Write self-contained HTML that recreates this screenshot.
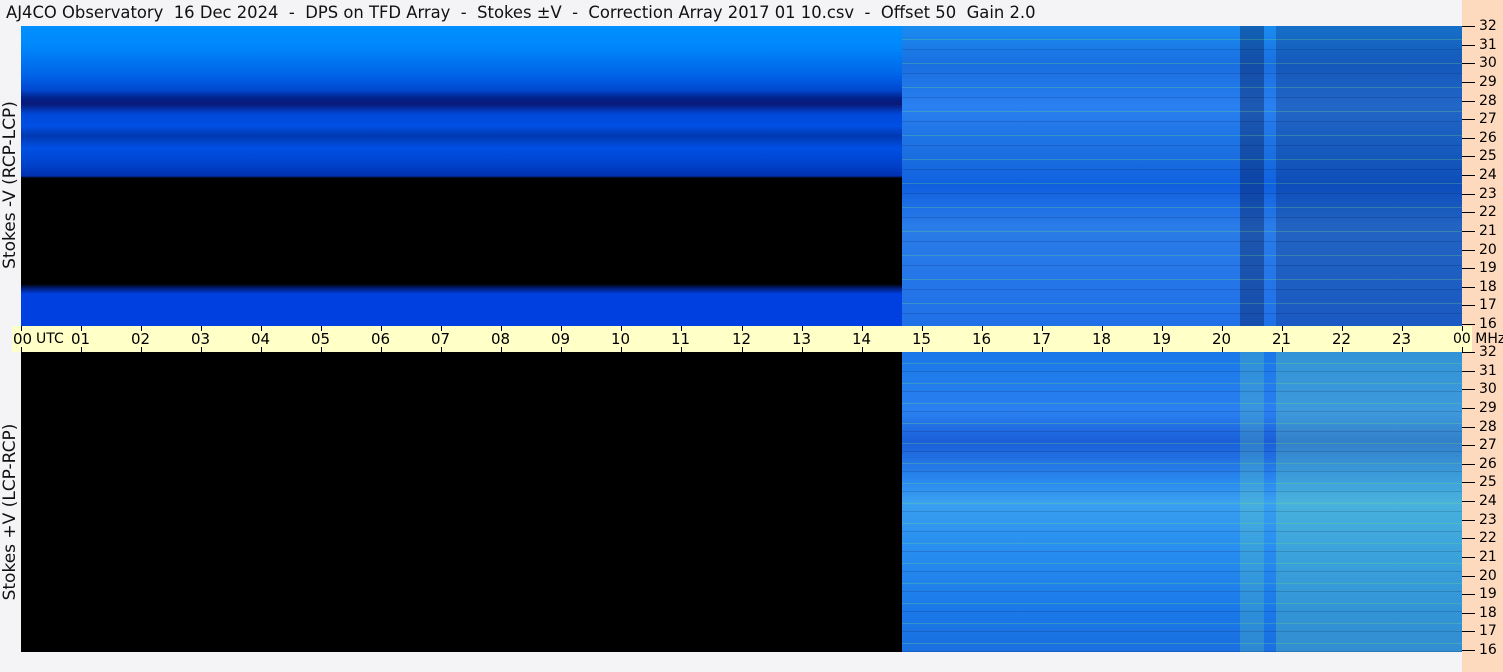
<!DOCTYPE html><html><head><style>
body{margin:0;width:1503px;height:672px;background:#f4f4f6;position:relative;overflow:hidden;font-family:"DejaVu Sans","Liberation Sans",sans-serif;}
.t{position:absolute;left:6px;top:3px;font-size:16.4px;color:#111;white-space:pre;}
.p{position:absolute;left:21px;width:1441px;}
#p1{top:26px;height:300px;background:linear-gradient(#0090ff 0px,#0088fb 20px,#0062e8 50px,#0048d0 64px,#00218a 72px,#0a1a78 78px,#0048d8 88px,#0050e4 100px,#0038b0 110px,#0050e4 122px,#0040c8 140px,#0030b0 150px,#000 152px,#000 258px,#001a70 262px,#0040e0 268px,#0040e0 300px);}
#p2{top:352px;height:300px;background:#000;}
.d{position:absolute;left:902px;width:560px;}
#d1{top:26px;height:300px;background:
repeating-linear-gradient(transparent 0 13px,rgba(120,230,120,.25) 13px 14px,transparent 14px 23px,rgba(0,0,40,.15) 23px 24px),
linear-gradient(90deg,transparent 338px,rgba(0,0,40,.3) 338px 362px,transparent 362px 374px,rgba(0,0,40,.2) 374px),
linear-gradient(#1a8cf0,#1a6ee0 40px,#2a80f0 80px,#1a6ee0 130px,#1060e0 160px,#2a7ce8 200px,#2070e8 300px);}
#d2{top:352px;height:300px;background:
repeating-linear-gradient(transparent 0 11px,rgba(120,230,120,.25) 11px 12px,transparent 12px 19px,rgba(0,0,40,.15) 19px 20px),
linear-gradient(90deg,transparent 338px,rgba(120,230,160,.2) 338px 362px,transparent 362px 374px,rgba(120,230,160,.25) 374px),
linear-gradient(#1a78e8,#2a80f0 60px,#1a5ed8 90px,#2a8af0 130px,#3aa0f0 150px,#2a90f0 190px,#1a78e8 260px,#1a70e0 300px);}
.ax{position:absolute;left:12px;top:326px;width:1460px;height:26px;background:#ffffc8;}
.r{position:absolute;left:1462px;top:0;width:41px;height:672px;background:#fddabe;}
.tk{position:absolute;width:1px;background:#000;}
.lb{position:absolute;font-size:15px;color:#000;line-height:16px;white-space:nowrap;}
.vl{position:absolute;font-size:17px;color:#111;transform:rotate(-90deg);transform-origin:center;white-space:nowrap;width:240px;text-align:center;}
</style></head><body>
<div class="t">AJ4CO Observatory  16 Dec 2024  -  DPS on TFD Array  -  Stokes ±V  -  Correction Array 2017 01 10.csv  -  Offset 50  Gain 2.0</div>
<div class="r"></div>
<div class="p" id="p1"></div><div class="d" id="d1"></div>
<div class="p" id="p2"></div><div class="d" id="d2"></div>
<div class="ax"></div>
<div class="vl" style="left:-110px;top:175px">Stokes -V (RCP-LCP)</div>
<div class="vl" style="left:-110px;top:502px">Stokes +V (LCP-RCP)</div>
<div id="g"></div>
<script>
var g=document.getElementById('g'),h='';
for(var i=0;i<=24;i++){var x=Math.round(21+i*1441/24);
h+='<div class="tk" style="left:'+x+'px;top:326px;height:5px"></div><div class="tk" style="left:'+x+'px;top:347px;height:5px"></div>';
var s=(i%24<10?'0':'')+(i%24);
if(i==0)h+='<div class="lb" style="left:13px;top:331px">00</div><div class="lb" style="left:36px;top:331px;font-size:14px">UTC</div>';
else if(i==24)h+='<div class="lb" style="left:1453px;top:331px;font-size:14px">00 MHz</div>';
else h+='<div class="lb" style="left:'+(x-10)+'px;top:331px">'+s+'</div>';}
[26,352].forEach(function(t){for(var k=0;k<=16;k++){var y=Math.round(t+k*298/16);
h+='<div class="tk" style="left:1462px;top:'+y+'px;width:13px;height:1px"></div><div class="lb" style="left:1479px;top:'+(y-8)+'px;font-size:14px">'+(32-k)+'</div>';}});
g.innerHTML=h;
</script>
</body></html>
